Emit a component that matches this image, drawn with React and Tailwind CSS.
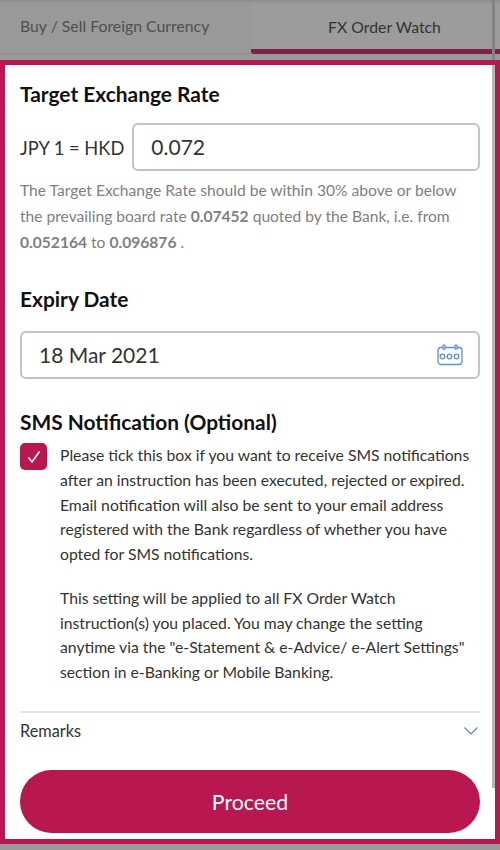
import React from 'react';

const CalendarIcon = () => (
  <svg width="26" height="22" viewBox="0 0 26 22" fill="none" stroke="#5b8def" strokeWidth="1.3">
    <rect x="1" y="3.5" width="24" height="17" rx="3" />
    <rect x="6" y="0.8" width="2" height="4.5" rx="1" fill="#fff" />
    <rect x="18" y="0.8" width="2" height="4.5" rx="1" fill="#fff" />
    <circle cx="5.5" cy="12.5" r="2.3" />
    <circle cx="12.5" cy="12.5" r="2.3" />
    <circle cx="19.5" cy="12.5" r="2.3" />
  </svg>
);

const App = () => {
  return (
    <div className="w-[500px] h-[850px] bg-[#999999] flex flex-col overflow-hidden font-['Lato',sans-serif]">
      {/* Dimmed tabs */}
      <div className="relative h-[60px] shrink-0 flex pt-[2px] border-t-[2px] border-[#8f8f8f]">
        <div className="w-[251px] h-[50px] flex items-center pl-[20px] pb-[5px] text-[15.8px] text-[#4f4f4f] border-b border-[#8f8f8f]">
          Buy / Sell Foreign Currency
        </div>
        <div className="flex-1 h-[50px] flex items-center justify-center pl-[18px] text-[15.8px] text-[#333333] bg-[#9c9c9c] border-b-[5px] border-[#7a2347] rounded-bl-[3px]">
          FX Order Watch
        </div>
        <div className="absolute right-[5px] top-[-2px] w-[3px] h-[60px] bg-[#828282]" />
      </div>

      {/* Panel */}
      <div className="h-[784px] shrink-0 border-[5px] border-[#b9174f] bg-white flex">
        <div className="w-[487px] shrink-0 pl-[15px] pr-[12px] flex flex-col">
          <h2 className="mt-[14px] text-[20.9px] leading-[30px] font-bold text-[#111111]">Target Exchange Rate</h2>

          <div className="mt-[14px] flex items-center gap-[8px]">
            <span className="mt-[3px] text-[18.3px] text-[#333333] whitespace-nowrap">JPY 1 = HKD</span>
            <div className="flex-1 h-[48px] border-2 border-[#c4c4c4] rounded-[6px] flex items-center pl-[17px] text-[21px] text-[#333333]">
              0.072
            </div>
          </div>

          <p className="mt-[6px] text-[15.6px] leading-[26px] text-[#808080] whitespace-nowrap">
            The Target Exchange Rate should be within 30% above or below<br />
            the prevailing board rate <b>0.07452</b> quoted by the Bank, i.e. from<br />
            <b>0.052164</b> to <b>0.096876</b> .
          </p>

          <h2 className="mt-[29px] text-[20.9px] leading-[30px] font-bold text-[#111111]">Expiry Date</h2>

          <div className="mt-[17px] h-[48px] border-2 border-[#c4c4c4] rounded-[6px] flex items-center justify-between pl-[17px] pr-[15px] text-[21px] text-[#333333]">
            <span>18 Mar 2021</span>
            <CalendarIcon />
          </div>

          <h2 className="mt-[28px] text-[20.9px] leading-[30px] font-bold text-[#111111]">SMS Notification (Optional)</h2>

          <div className="mt-[6px] flex">
            <div className="w-[27px] h-[27px] shrink-0 rounded-[5px] bg-[#b9174f] flex items-center justify-center">
              <svg width="14" height="14" viewBox="0 0 14 14" fill="none" stroke="#fff" strokeWidth="1.6">
                <path d="M1.5 7.5 L5 12 L12.5 1.5" />
              </svg>
            </div>
            <div className="ml-[13px] text-[15.73px] leading-[24.75px] text-[#333333] whitespace-nowrap">
              <p>
                Please tick this box if you want to receive SMS notifications<br />
                after an instruction has been executed, rejected or expired.<br />
                Email notification will also be sent to your email address<br />
                registered with the Bank regardless of whether you have<br />
                opted for SMS notifications.
              </p>
              <p className="mt-[19px]">
                This setting will be applied to all FX Order Watch<br />
                instruction(s) you placed. You may change the setting<br />
                anytime via the "e-Statement &amp; e-Advice/ e-Alert Settings"<br />
                section in e-Banking or Mobile Banking.
              </p>
            </div>
          </div>

          <div className="mt-[26px] border-t-2 border-[#e4e4e4] h-[38px] flex items-center justify-between pr-[2px]">
            <span className="text-[16.3px] text-[#333333]">Remarks</span>
            <svg width="14" height="8" viewBox="0 0 14 8" fill="none" stroke="#5f7fb5" strokeWidth="1.1">
              <path d="M0.5 0.5 L7 7 L13.5 0.5" />
            </svg>
          </div>

          <button className="mt-[21px] h-[63px] pt-[3px] rounded-full bg-[#b9174f] text-white text-[21.3px] shrink-0">
            Proceed
          </button>
        </div>
        {/* Scrollbar */}
        <div className="w-[3px] h-[723px] bg-[#b5b5b5]" />
      </div>
    </div>
  );
};

export default App;
